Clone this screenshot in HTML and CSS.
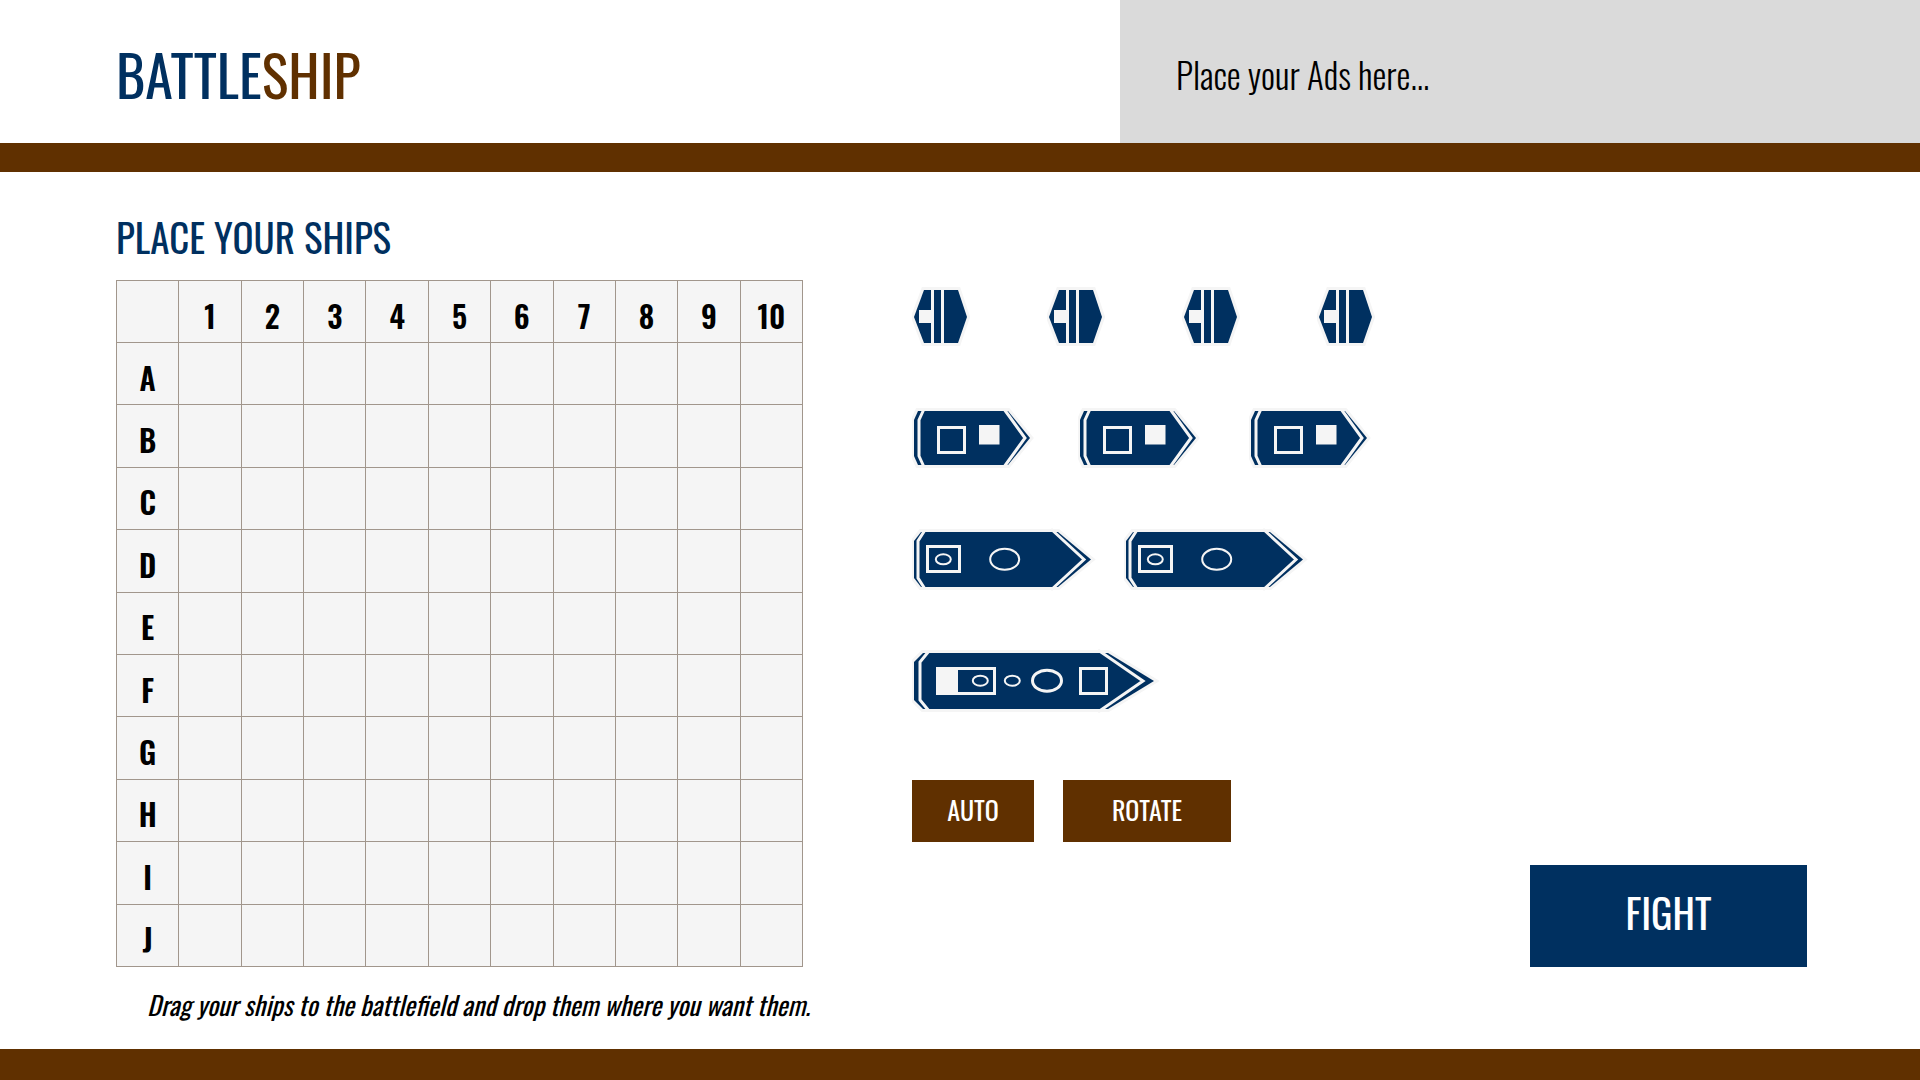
FILE: index.html
```html
<!DOCTYPE html>
<html lang="en">
<head>
<meta charset="utf-8">
<meta name="viewport" content="width=device-width, initial-scale=1">
<title>Battleship</title>
<link rel="stylesheet" href="styles.css">
</head>
<body>
<svg class="defs" aria-hidden="true">
  <defs>
    <symbol id="boat" viewBox="2 0 60 62">
      <path class="halo" d="M4 31 14 4H48L57 31 48 57H14Z"/>
      <path class="hull" d="M4 31 14 4H48L57 31 48 57H14Z"/>
      <path class="fill" d="M21 3h3v55h-3zM31 3h3v55h-3zM9 24h12v13H9z"/>
    </symbol>
    <symbol id="destroyer" viewBox="2 0 122 64">
      <path class="halo" d="M4 14 8 5H98L120 32 98 59H8L4 50Z"/>
      <path class="hull" d="M4 14 8 5H98L120 32 98 59H8L4 50Z"/>
      <path class="line" d="M14 3 9 14V50L14 61M94 3 115 32 94 61"/>
      <rect class="line" x="28.500" y="21.500" width="26" height="25"/>
      <rect class="fill" x="69" y="19" width="20.500" height="19.500"/>
    </symbol>
    <symbol id="cruiser" viewBox="2 0 184 67">
      <path class="halo" d="M4 15 11 6H148L181 33.500 148 61H11L4 52Z"/>
      <path class="hull" d="M4 15 11 6H148L181 33.500 148 61H11L4 52Z"/>
      <path class="line" d="M15 4 8 15V52L15 63M141 3 174 33.500 141 64"/>
      <rect class="line" x="17.500" y="20.500" width="32" height="25"/>
      <ellipse class="thin" cx="33.300" cy="33.300" rx="7.500" ry="5"/>
      <ellipse class="thin" cx="94.700" cy="33.300" rx="14.500" ry="10.500"/>
    </symbol>
    <symbol id="carrier" viewBox="2 -1 248 69">
      <path class="halo" d="M4 15 13 6H198L244 34 198 62H13L4 53Z"/>
      <path class="hull" d="M4 15 13 6H198L244 34 198 62H13L4 53Z"/>
      <path class="line" d="M19 4 10 15V53L19 64M188 3 233 34 188 65"/>
      <rect class="line" x="27.500" y="21.500" width="57" height="25"/>
      <rect class="fill" x="26" y="20" width="22" height="28"/>
      <ellipse class="thin" cx="70.300" cy="33.700" rx="7.500" ry="5"/>
      <ellipse class="thin" cx="102.300" cy="33.700" rx="7.500" ry="5"/>
      <ellipse class="line" cx="137" cy="33.700" rx="14.500" ry="10.500"/>
      <rect class="line" x="170.500" y="21.500" width="26" height="25"/>
    </symbol>
  </defs>
</svg>

<header class="header">
  <h1 class="logo">BATTLE<span class="logo-accent">SHIP</span></h1>
  <aside class="ads">Place your Ads here...</aside>
</header>

<main class="main">
  <h2 class="title">PLACE YOUR SHIPS</h2>
  <table class="board">
    <thead>
      <tr><td></td><th scope="col">1</th><th scope="col">2</th><th scope="col">3</th><th scope="col">4</th><th scope="col">5</th><th scope="col">6</th><th scope="col">7</th><th scope="col">8</th><th scope="col">9</th><th scope="col">10</th></tr>
    </thead>
    <tbody>
      <tr><th scope="row">A</th><td></td><td></td><td></td><td></td><td></td><td></td><td></td><td></td><td></td><td></td></tr>
      <tr><th scope="row">B</th><td></td><td></td><td></td><td></td><td></td><td></td><td></td><td></td><td></td><td></td></tr>
      <tr><th scope="row">C</th><td></td><td></td><td></td><td></td><td></td><td></td><td></td><td></td><td></td><td></td></tr>
      <tr><th scope="row">D</th><td></td><td></td><td></td><td></td><td></td><td></td><td></td><td></td><td></td><td></td></tr>
      <tr><th scope="row">E</th><td></td><td></td><td></td><td></td><td></td><td></td><td></td><td></td><td></td><td></td></tr>
      <tr><th scope="row">F</th><td></td><td></td><td></td><td></td><td></td><td></td><td></td><td></td><td></td><td></td></tr>
      <tr><th scope="row">G</th><td></td><td></td><td></td><td></td><td></td><td></td><td></td><td></td><td></td><td></td></tr>
      <tr><th scope="row">H</th><td></td><td></td><td></td><td></td><td></td><td></td><td></td><td></td><td></td><td></td></tr>
      <tr><th scope="row">I</th><td></td><td></td><td></td><td></td><td></td><td></td><td></td><td></td><td></td><td></td></tr>
      <tr><th scope="row">J</th><td></td><td></td><td></td><td></td><td></td><td></td><td></td><td></td><td></td><td></td></tr>
    </tbody>
  </table>
  <section class="side">
    <div class="fleet">
      <div class="ships ships-boat">
        <svg width="60" height="62"><use href="#boat"/></svg>
        <svg width="60" height="62"><use href="#boat"/></svg>
        <svg width="60" height="62"><use href="#boat"/></svg>
        <svg width="60" height="62"><use href="#boat"/></svg>
      </div>
      <div class="ships ships-destroyer">
        <svg width="122" height="64"><use href="#destroyer"/></svg>
        <svg width="122" height="64"><use href="#destroyer"/></svg>
        <svg width="122" height="64"><use href="#destroyer"/></svg>
      </div>
      <div class="ships ships-cruiser">
        <svg width="184" height="67"><use href="#cruiser"/></svg>
        <svg width="184" height="67"><use href="#cruiser"/></svg>
      </div>
      <div class="ships">
        <svg width="248" height="69"><use href="#carrier"/></svg>
      </div>
    </div>
    <div class="actions">
      <button class="button button-auto" type="button">AUTO</button>
      <button class="button button-rotate" type="button">ROTATE</button>
    </div>
    <button class="button button-fight" type="button">FIGHT</button>
  </section>
  <p class="hint">Drag your ships to the battlefield and drop them where you want them.</p>
</main>

<footer class="footer"></footer>
</body>
</html>
```
FILE: styles.css
```css
:root {
  --navy: #003060;
  --brown: #603000;
  --pale: #f5f5f5;
}

* {
  box-sizing: border-box;
}

body {
  margin: 0;
  min-height: 100vh;
  display: flex;
  flex-direction: column;
  background: #fff;
  color: #000;
  font-family: Oswald, "Roboto Condensed", "Liberation Sans", sans-serif;
}

.defs {
  position: absolute;
  width: 0;
  height: 0;
}

.header {
  display: grid;
  grid-template-columns: 7fr 5fr;
  border-bottom: 29px solid var(--brown);
}

.logo {
  margin: 0;
  padding: 42px 0 37px 116px;
  color: var(--navy);
  font-size: 56px;
  font-weight: 400;
  line-height: 64px;
}

.logo-accent {
  color: var(--brown);
}

.ads {
  display: flex;
  align-items: center;
  padding: 4px 56px 0;
  background: #dadada;
  font-size: 35px;
  font-weight: 300;
}

.main {
  flex: 1;
  display: grid;
  grid-template-columns: 687fr 895fr;
  grid-template-rows: auto auto 1fr;
  column-gap: 109px;
  padding: 40px 113px 0 116px;
}

.title {
  grid-column: 1 / -1;
  margin: 0 0 20px;
  color: var(--navy);
  font-size: 39px;
  font-weight: 400;
  line-height: 48px;
}

.board {
  width: 100%;
  height: 687px;
  table-layout: fixed;
  border-collapse: collapse;
  background: var(--pale);
}

.board th,
.board td {
  height: 62px;
  padding: 8px 0 0;
  border: 1px solid #a1968c;
}

.board th {
  font-size: 30px;
  font-weight: 600;
  line-height: 32px;
}

.side {
  display: flex;
  flex-direction: column;
  align-items: flex-start;
  padding-top: 6px;
}

.fleet {
  display: grid;
  grid-auto-rows: 120px;
}

.ships {
  display: grid;
  justify-content: start;
  align-items: start;
}

.ships svg {
  display: block;
}

.ships-boat {
  grid-template-columns: repeat(4, 135px);
}

.ships-destroyer {
  grid-template-columns: 166px 171px auto;
}

.ships-cruiser {
  grid-template-columns: 212px auto;
}

.hull {
  fill: var(--navy);
}

.fill {
  fill: var(--pale);
}

.halo {
  fill: var(--pale);
  stroke: var(--pale);
  stroke-width: 6;
}

.line {
  fill: none;
  stroke: var(--pale);
  stroke-width: 3;
}

.thin {
  fill: none;
  stroke: var(--pale);
  stroke-width: 2;
}

.actions {
  display: flex;
  gap: 29px;
  margin-top: 14px;
}

.button {
  padding: 0 0 4px;
  border: 0;
  background: var(--brown);
  color: #fff;
  font-family: inherit;
  font-size: 26px;
  cursor: pointer;
}

.button-auto {
  width: 122px;
  height: 62px;
}

.button-rotate {
  width: 168px;
  height: 62px;
}

.button-fight {
  width: 277px;
  height: 102px;
  margin-top: auto;
  padding-bottom: 8px;
  align-self: flex-end;
  background: var(--navy);
  font-size: 40px;
}

.hint {
  grid-column: 1 / -1;
  margin: 0;
  padding: 18px 0 20px 31px;
  font-size: 26px;
  font-style: italic;
  line-height: 40px;
}

.footer {
  height: 31px;
  background: var(--brown);
}
```
